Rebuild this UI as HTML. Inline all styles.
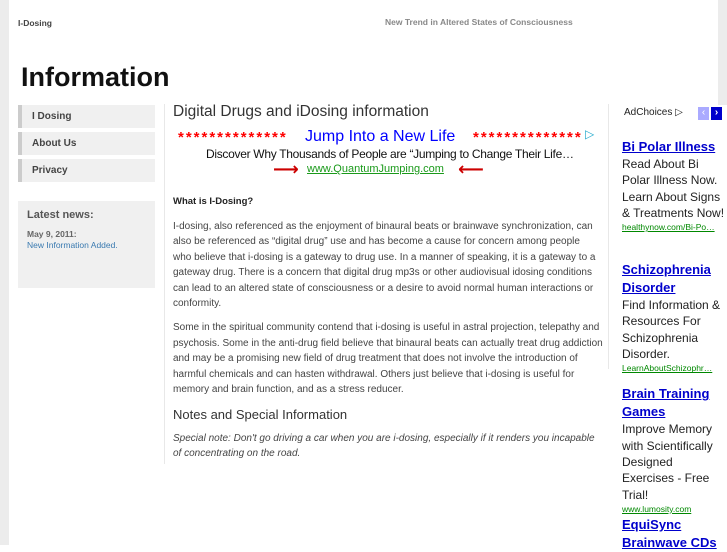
<!DOCTYPE html>
<html><head><meta charset="utf-8"><style>
*{margin:0;padding:0;box-sizing:border-box}
body{width:727px;height:545px;overflow:hidden;background:#fff;font-family:"Liberation Sans",sans-serif;position:relative;color:#333}
.a{position:absolute}
.nav{position:absolute;left:18px;width:137px;height:23px;background:#f0f0f0;border-left:4px solid #ccc;font-size:10px;font-weight:bold;color:#444;padding:6px 0 0 10px}
p.t{font-size:10px;line-height:15.4px;color:#444;letter-spacing:0;white-space:nowrap}
.ad a{color:#00c;font-weight:bold;font-size:13px;text-decoration:underline;line-height:18px;display:block}
.ad .d{font-size:12px;line-height:16.3px;color:#222}
.ad .u{font-size:8.5px;color:#080;text-decoration:underline;line-height:13px}
.st{position:absolute;top:3px;color:#f00;font-size:15px;font-weight:bold;letter-spacing:2px}
</style></head><body>
<div class="a" style="left:0;top:0;width:9px;height:545px;background:#ececec"></div>
<div class="a" style="left:718px;top:0;width:9px;height:105px;background:#ececec"></div>
<div class="a" style="left:18px;top:18px;font-size:8.5px;font-weight:bold;color:#444">I-Dosing</div>
<div class="a" style="left:385px;top:17px;font-size:8.5px;font-weight:bold;color:#888">New Trend in Altered States of Consciousness</div>
<div class="a" style="left:21px;top:62px;font-size:27px;font-weight:bold;color:#111">Information</div>
<div class="nav" style="top:105px">I Dosing</div>
<div class="nav" style="top:132px">About Us</div>
<div class="nav" style="top:159px">Privacy</div>
<div class="a" style="left:18px;top:201px;width:137px;height:87px;background:#f0f0f0;padding:8px 9px">
<div style="font-size:11px;font-weight:bold;color:#555">Latest news:</div>
<div style="font-size:8.5px;color:#666;margin-top:8px;font-weight:bold">May 9, 2011:</div>
<div style="font-size:8.5px;color:#3a7ab0;margin-top:1px">New Information Added.</div>
</div>
<div class="a" style="left:164px;top:104px;width:1px;height:360px;background:#e8e8e8"></div>
<div class="a" style="left:608px;top:104px;width:1px;height:265px;background:#e8e8e8"></div>
<div class="a" style="left:173px;top:103px;font-size:15.5px;color:#333">Digital Drugs and iDosing information</div>
<div class="a" style="left:178px;top:126px;width:420px;height:55px">
<div class="st" style="left:0">**************</div>
<div class="a" style="left:127px;top:2px;color:#00f;font-size:16px">Jump Into a New Life</div>
<div class="st" style="left:295px">**************</div>
<div class="a" style="left:407px;top:1px;color:#2ac;font-size:12px;font-family:'DejaVu Sans',sans-serif">▷</div>
<div class="a" style="left:28px;top:21px;color:#111;font-size:12px;letter-spacing:-0.3px">Discover Why Thousands of People are “Jumping to Change Their Life…</div>
<div class="a" style="left:95px;top:33px;color:#c00;font-size:18px;font-weight:bold;font-family:'DejaVu Sans',sans-serif">⟶</div>
<div class="a" style="left:129px;top:37px;color:#1a9a1a;font-size:11px;text-decoration:underline">www.QuantumJumping.com</div>
<div class="a" style="left:280px;top:33px;color:#c00;font-size:18px;font-weight:bold;font-family:'DejaVu Sans',sans-serif">⟵</div>
</div>
<div class="a" style="left:173px;top:196px;font-size:9.5px;font-weight:bold;color:#222">What is I-Dosing?</div>
<div class="a" style="left:173px;top:219px;width:425px">
<p class="t">I-dosing, also referenced as the enjoyment of binaural beats or brainwave synchronization, can<br>also be referenced as “digital drug” use and has become a cause for concern among people<br>who believe that i-dosing is a gateway to drug use. In a manner of speaking, it is a gateway to a<br>gateway drug. There is a concern that digital drug mp3s or other audiovisual idosing conditions<br>can lead to an altered state of consciousness or a desire to avoid normal human interactions or<br>conformity.</p>
<p class="t" style="margin-top:9px">Some in the spiritual community contend that i-dosing is useful in astral projection, telepathy and<br>psychosis. Some in the anti-drug field believe that binaural beats can actually treat drug addiction<br>and may be a promising new field of drug treatment that does not involve the introduction of<br>harmful chemicals and can hasten withdrawal. Others just believe that i-dosing is useful for<br>memory and brain function, and as a stress reducer.</p>
</div>
<div class="a" style="left:173px;top:407px;font-size:13px;color:#333">Notes and Special Information</div>
<div class="a" style="left:173px;top:431px;width:425px"><p class="t" style="font-style:italic">Special note: Don't go driving a car when you are i-dosing, especially if it renders you incapable<br>of concentrating on the road.</p></div>
<div class="a" style="left:624px;top:107px;font-size:10px;color:#222">AdChoices ▷</div>
<div class="a" style="left:698px;top:107px;width:11px;height:13px;background:#aaf;color:#fff;font-size:10px;text-align:center">‹</div>
<div class="a" style="left:711px;top:107px;width:11px;height:13px;background:#00c;color:#fff;font-size:10px;text-align:center;font-weight:bold">›</div>
<div class="a ad" style="left:622px;top:138px;width:105px">
<a>Bi Polar Illness</a>
<div class="d">Read About Bi Polar Illness Now. Learn About Signs &amp; Treatments Now!</div>
<div class="u">healthynow.com/Bi-Po…</div>
<a style="margin-top:27px">Schizophrenia Disorder</a>
<div class="d">Find Information &amp; Resources For Schizophrenia Disorder.</div>
<div class="u">LearnAboutSchizophr…</div>
<a style="margin-top:10px">Brain Training Games</a>
<div class="d">Improve Memory with Scientifically Designed Exercises - Free Trial!</div>
<div class="u">www.lumosity.com</div>
<a>EquiSync Brainwave CDs</a>
</div>
</body></html>
